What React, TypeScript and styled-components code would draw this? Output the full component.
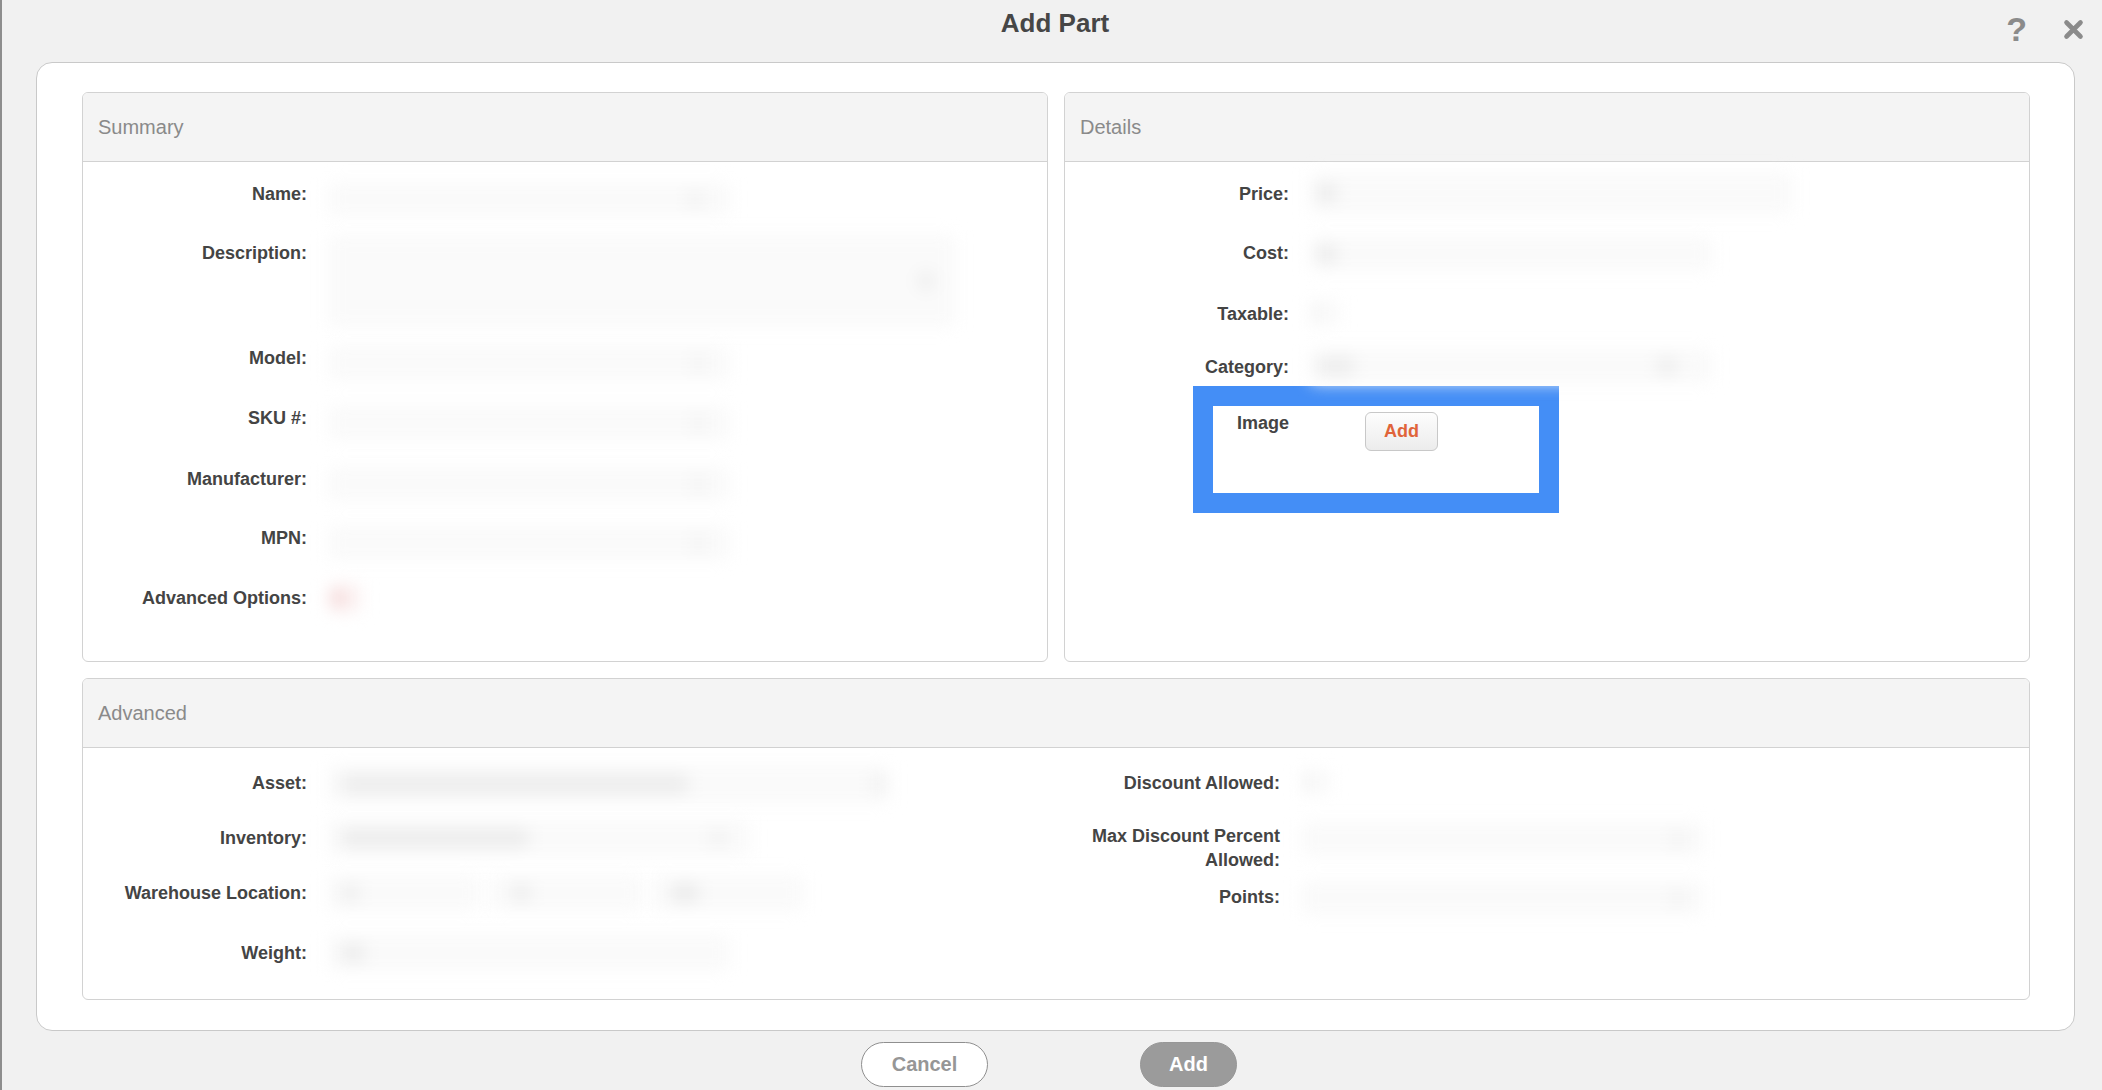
import React from "react";
import styled, { createGlobalStyle } from "styled-components";

const GlobalStyle = createGlobalStyle`
  * {
    box-sizing: border-box;
  }

  html,
  body {
    margin: 0;
    padding: 0;
    background: #f1f1f1;
  }

  body {
    font-family: "Liberation Sans", Arial, Helvetica, sans-serif;
    color: #444;
  }
`;

type Spot = { w: number; ml?: number; tone?: string };

type Blur = {
  w: number;
  h?: number;
  mt?: number;
  bg?: string;
  spots?: Spot[];
};

type Row = {
  label: React.ReactNode;
  h: number;
  fields?: Blur[];
};

const summaryRows: Row[] = [
  { label: "Name:", h: 59, fields: [{ w: 402, h: 34, spots: [{ w: 14, ml: 360, tone: "#f2f2f2" }] }] },
  {
    label: "Description:",
    h: 105,
    fields: [{ w: 628, h: 92, mt: -6, spots: [{ w: 16, ml: 590, tone: "#eeeeee" }] }],
  },
  { label: "Model:", h: 60, fields: [{ w: 402, h: 34, spots: [{ w: 12, ml: 364, tone: "#f3f3f3" }] }] },
  { label: "SKU #:", h: 61, fields: [{ w: 402, h: 34, spots: [{ w: 12, ml: 364, tone: "#f3f3f3" }] }] },
  { label: "Manufacturer:", h: 59, fields: [{ w: 402, h: 34, spots: [{ w: 12, ml: 364, tone: "#f3f3f3" }] }] },
  { label: "MPN:", h: 60, fields: [{ w: 402, h: 34, spots: [{ w: 12, ml: 364, tone: "#f3f3f3" }] }] },
  { label: "Advanced Options:", h: 60, fields: [{ w: 34, h: 30, mt: -3, bg: "#fcf4f4", spots: [{ w: 18, ml: 2, tone: "#f6dcdc" }] }] },
];

const detailRows: Row[] = [
  { label: "Price:", h: 59, fields: [{ w: 482, h: 42, mt: -10, spots: [{ w: 22, ml: 6, tone: "#ececec" }] }] },
  { label: "Cost:", h: 61, fields: [{ w: 402, h: 34, mt: -4, spots: [{ w: 22, ml: 6, tone: "#ececec" }] }] },
  { label: "Taxable:", h: 53, fields: [{ w: 30, h: 26, mt: -2, spots: [{ w: 10, ml: 2, tone: "#f4f4f4" }] }] },
  {
    label: "Category:",
    h: 31,
    fields: [
      {
        w: 402,
        h: 34,
        mt: -6,
        spots: [
          { w: 40, ml: 6, tone: "#eeeeee" },
          { w: 22, ml: 300, tone: "#efefef" },
        ],
      },
    ],
  },
];

const advancedLeft: Row[] = [
  {
    label: "Asset:",
    h: 55,
    fields: [
      {
        w: 562,
        h: 38,
        mt: -6,
        spots: [
          { w: 350, ml: 12, tone: "#ededed" },
          { w: 16, ml: 180, tone: "#f2f2f2" },
        ],
      },
    ],
  },
  {
    label: "Inventory:",
    h: 55,
    fields: [
      {
        w: 422,
        h: 36,
        mt: -6,
        spots: [
          { w: 190, ml: 12, tone: "#ededed" },
          { w: 16, ml: 180, tone: "#f2f2f2" },
        ],
      },
    ],
  },
  {
    label: "Warehouse Location:",
    h: 60,
    fields: [
      { w: 152, h: 36, mt: -6, spots: [{ w: 20, ml: 12, tone: "#efefef" }] },
      { w: 152, h: 36, mt: -6, spots: [{ w: 22, ml: 20, tone: "#efefef" }] },
      { w: 152, h: 36, mt: -6, spots: [{ w: 30, ml: 18, tone: "#ececec" }] },
    ],
  },
  {
    label: "Weight:",
    h: 60,
    fields: [{ w: 402, h: 36, mt: -6, spots: [{ w: 26, ml: 12, tone: "#ededed" }] }],
  },
];

const advancedRight: Row[] = [
  { label: "Discount Allowed:", h: 53, fields: [{ w: 30, h: 26, mt: -2, spots: [{ w: 10, ml: 2, tone: "#f4f4f4" }] }] },
  {
    label: "Max Discount Percent Allowed:",
    h: 61,
    fields: [{ w: 402, h: 34, mt: -2, spots: [{ w: 14, ml: 370, tone: "#f3f3f3" }] }],
  },
  { label: "Points:", h: 60, fields: [{ w: 402, h: 34, mt: -4, spots: [{ w: 14, ml: 370, tone: "#f3f3f3" }] }] },
];

const FormRows = ({ rows }: { rows: Row[] }) => (
  <>
    {rows.map((row, i) => (
      <FieldRow key={i} $h={row.h}>
        <Label>{row.label}</Label>
        <Values>
          {row.fields?.map((f, j) => (
            <Smudge key={j} $w={f.w} $h={f.h ?? 32} $mt={f.mt ?? 0} $bg={f.bg}>
              {f.spots?.map((s, k) => (
                <SmudgeSpot key={k} $w={s.w} $ml={s.ml ?? 0} $tone={s.tone} />
              ))}
            </Smudge>
          ))}
        </Values>
      </FieldRow>
    ))}
  </>
);

const CloseIcon = () => (
  <svg width="21" height="21" viewBox="0 0 21 21">
    <path d="M3.5 3.5 L17.5 17.5 M17.5 3.5 L3.5 17.5" stroke="#8b8b8b" strokeWidth="4.6" strokeLinecap="round" fill="none" />
  </svg>
);

const App = () => {
  return (
    <>
      <GlobalStyle />
      <Page>
        <TopBar>
          <span />
          <Title>Add Part</Title>
          <Actions>
            <HelpMark>?</HelpMark>
            <CloseIcon />
          </Actions>
        </TopBar>

        <Card>
          <TopRow>
            <Panel $h={570}>
              <PanelHeader>Summary</PanelHeader>
              <PanelBody $pt={20}>
                <FormRows rows={summaryRows} />
              </PanelBody>
            </Panel>

            <Panel $h={570}>
              <PanelHeader>Details</PanelHeader>
              <PanelBody $pt={20}>
                <FormRows rows={detailRows} />
                <Highlight>
                  <ImageLabel>Image</ImageLabel>
                  <SmallAdd>Add</SmallAdd>
                </Highlight>
              </PanelBody>
            </Panel>
          </TopRow>

          <Panel $h={322}>
            <PanelHeader>Advanced</PanelHeader>
            <PanelBody $pt={23}>
              <AdvancedGrid>
                <div>
                  <FormRows rows={advancedLeft} />
                </div>
                <div>
                  <FormRows rows={advancedRight} />
                </div>
              </AdvancedGrid>
            </PanelBody>
          </Panel>
        </Card>

        <Footer>
          <CancelButton>Cancel</CancelButton>
          <AddButton>Add</AddButton>
        </Footer>
      </Page>
    </>
  );
};

export default App;

const Page = styled.div`
  position: relative;
  width: 2102px;
  height: 1090px;
  border-left: 2px solid #8e8e8e;
  overflow: hidden;

  &::before {
    content: "";
    position: absolute;
    left: -2px;
    top: 57px;
    width: 2px;
    height: 16px;
    background: #d2643e;
  }
`;

const TopBar = styled.div`
  display: grid;
  grid-template-columns: 1fr auto 1fr;
  align-items: start;
  height: 62px;
`;

const Title = styled.h1`
  margin: 0;
  padding-top: 8px;
  font-size: 26px;
  line-height: 30px;
  font-weight: 700;
  color: #464646;
  transform: translateX(3px);
`;

const Actions = styled.div`
  justify-self: end;
  display: flex;
  align-items: center;
  gap: 36px;
  padding-top: 12px;
  padding-right: 18px;
`;

const HelpMark = styled.span`
  font-size: 34px;
  line-height: 34px;
  font-weight: 700;
  color: #8b8b8b;
`;

const Card = styled.div`
  width: 2039px;
  height: 969px;
  margin-left: 34px;
  padding: 29px 44px 0 45px;
  background: #fff;
  border: 1px solid #c9c9c9;
  border-radius: 16px;
  display: flex;
  flex-direction: column;
  gap: 16px;
`;

const TopRow = styled.div`
  display: grid;
  grid-template-columns: 1fr 1fr;
  gap: 16px;
`;

const Panel = styled.section<{ $h: number }>`
  height: ${(p) => p.$h}px;
  border: 1px solid #d2d2d2;
  border-radius: 6px;
  overflow: hidden;
  background: #fff;
  display: flex;
  flex-direction: column;
`;

const PanelHeader = styled.div`
  flex: none;
  height: 69px;
  display: flex;
  align-items: center;
  padding-left: 15px;
  background: #f4f4f4;
  border-bottom: 1px solid #d2d2d2;
  font-size: 20px;
  color: #8a8a8a;
`;

const PanelBody = styled.div<{ $pt: number }>`
  flex: 1;
  padding-top: ${(p) => p.$pt}px;
`;

const FieldRow = styled.div<{ $h: number }>`
  display: flex;
  align-items: flex-start;
  height: ${(p) => p.$h}px;
`;

const Label = styled.div`
  flex: none;
  width: 224px;
  padding-left: 20px;
  text-align: right;
  font-size: 18px;
  line-height: 24px;
  font-weight: 700;
  color: #444;
`;

const Values = styled.div`
  display: flex;
  align-items: flex-start;
  gap: 10px;
  margin-left: 21px;
`;

const Smudge = styled.div<{ $w: number; $h: number; $mt: number; $bg?: string }>`
  display: flex;
  align-items: center;
  width: ${(p) => p.$w}px;
  height: ${(p) => p.$h}px;
  margin-top: ${(p) => p.$mt}px;
  background: ${(p) => p.$bg ?? "#fafafa"};
  border-radius: 6px;
  filter: blur(8px);
`;

const SmudgeSpot = styled.div<{ $w: number; $ml: number; $tone?: string }>`
  flex: none;
  width: ${(p) => p.$w}px;
  height: 20px;
  margin-left: ${(p) => p.$ml}px;
  background: ${(p) => p.$tone ?? "#eeeeee"};
  border-radius: 10px;
`;

const Highlight = styled.div`
  display: flex;
  align-items: flex-start;
  width: 366px;
  height: 127px;
  margin-left: 128px;
  border: 20px solid #448ef6;
  background: #fff;
`;

const ImageLabel = styled.div`
  width: 76px;
  padding-top: 5px;
  text-align: right;
  font-size: 18px;
  line-height: 24px;
  font-weight: 700;
  color: #444;
`;

const SmallAdd = styled.button`
  width: 73px;
  height: 39px;
  margin: 6px 0 0 76px;
  padding: 0;
  border: 1px solid #c8c8c8;
  border-radius: 6px;
  background: linear-gradient(#fdfdfd, #ececec);
  font-family: inherit;
  font-size: 18px;
  font-weight: 700;
  color: #e0643a;
`;

const AdvancedGrid = styled.div`
  display: grid;
  grid-template-columns: 1fr 1fr;
`;

const Footer = styled.div`
  display: flex;
  justify-content: center;
  gap: 152px;
  padding: 11px 6px 0 0;
`;

const PillButton = styled.button`
  height: 45px;
  padding: 0;
  border-radius: 23px;
  font-family: inherit;
  font-size: 20px;
  font-weight: 700;
`;

const CancelButton = styled(PillButton)`
  width: 127px;
  border: 1px solid #8f8f8f;
  background: #fff;
  color: #969696;
`;

const AddButton = styled(PillButton)`
  width: 97px;
  border: 1px solid #979797;
  background: #9b9b9b;
  color: #fff;
`;
